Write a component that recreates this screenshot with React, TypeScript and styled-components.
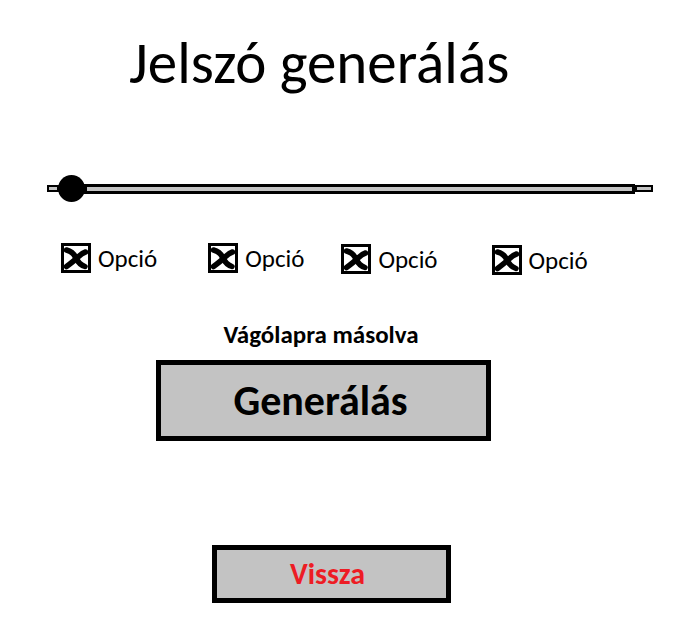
import React from "react";
import styled, { createGlobalStyle } from "styled-components";

const GlobalStyle = createGlobalStyle`
  html, body { margin: 0; padding: 0; background: #ffffff; }
  body { font-family: "Carlito", "Open Sans", sans-serif; color: #000; }
`;

const Page = styled.div`
  width: 686px;
  height: 622px;
  display: flex;
  flex-direction: column;
  align-items: flex-start;
  overflow: hidden;
`;

const Title = styled.h1`
  margin: 34px 0 0 129px;
  font-size: 59px;
  font-weight: 400;
  line-height: 1;
  white-space: nowrap;
`;

const SliderRow = styled.div`
  margin: 82px 0 0 47px;
  width: 606px;
  height: 27px;
  display: flex;
  align-items: center;
`;

const Cap = styled.div<{ $w: number }>`
  width: ${(p) => p.$w}px;
  height: 7px;
  box-sizing: border-box;
  border: 2px solid #000;
  background: #c3c3c3;
  flex: none;
`;

const Knob = styled.div`
  width: 27px;
  height: 27px;
  border-radius: 50%;
  background: #000;
  flex: none;
  margin: 0 -1px;
  position: relative;
  z-index: 1;
`;

const Track = styled.div`
  flex: 1;
  height: 10px;
  box-sizing: border-box;
  border: 3px solid #000;
  background: #c3c3c3;
`;

const Options = styled.div`
  margin-top: 41px;
  display: flex;
  align-items: flex-start;
`;

const Option = styled.label<{ $gap: number; $drop: number }>`
  margin: ${(p) => p.$drop}px 0 0 ${(p) => p.$gap}px;
  display: flex;
  align-items: center;
  gap: 7px;
  font-size: 25px;
  line-height: 1;
`;

const Box = styled.span`
  width: 30px;
  height: 30px;
  box-sizing: border-box;
  border: 3px solid #000;
  display: flex;
  align-items: center;
  justify-content: center;
  background: #fff;
  flex: none;
`;

const Notice = styled.div`
  margin: 47px 0 0 0;
  width: 642px;
  text-align: center;
  font-size: 25px;
  font-weight: 700;
  line-height: 1;
`;

const Button = styled.button<{
  $w: number;
  $h: number;
  $left: number;
  $top: number;
  $size: number;
  $color: string;
  $shift: number;
}>`
  margin: ${(p) => p.$top}px 0 0 ${(p) => p.$left}px;
  width: ${(p) => p.$w}px;
  height: ${(p) => p.$h}px;
  box-sizing: border-box;
  border: 5px solid #000;
  background: #c3c3c3;
  color: ${(p) => p.$color};
  font-family: "Carlito", "Open Sans", sans-serif;
  font-size: ${(p) => p.$size}px;
  font-weight: 700;
  line-height: 1;
  display: flex;
  align-items: center;
  justify-content: center;
  padding: 0 ${(p) => p.$shift}px 0 0;
  cursor: pointer;
`;

const CheckMark = () => (
  <svg width="24" height="24" viewBox="0 0 24 24">
    <path d="M2.5 4 Q 9 5.5, 12 12 T 21 20.5" stroke="#000" strokeWidth="5.5" fill="none" strokeLinecap="round" />
    <path d="M2.5 20.5 Q 10 15, 14 11 T 21.5 6" stroke="#000" strokeWidth="5.5" fill="none" strokeLinecap="round" />
  </svg>
);

const options = [
  { gap: 61, drop: 0 },
  { gap: 51, drop: 0 },
  { gap: 37, drop: 1 },
  { gap: 54, drop: 2 },
];

export default function App() {
  return (
    <>
      <GlobalStyle />
      <Page>
        <Title>Jelszó generálás</Title>
        <SliderRow>
          <Cap $w={12} />
          <Knob />
          <Track />
          <Cap $w={18} />
        </SliderRow>
        <Options>
          {options.map((o, i) => (
            <Option key={i} $gap={o.gap} $drop={o.drop}>
              <Box>
                <CheckMark />
              </Box>
              Opció
            </Option>
          ))}
        </Options>
        <Notice>Vágólapra másolva</Notice>
        <Button $w={335} $h={81} $left={156} $top={13} $size={42} $color="#000" $shift={6}>
          Generálás
        </Button>
        <Button $w={239} $h={58} $left={212} $top={104} $size={30} $color="#ed1c24" $shift={8}>
          Vissza
        </Button>
      </Page>
    </>
  );
}
